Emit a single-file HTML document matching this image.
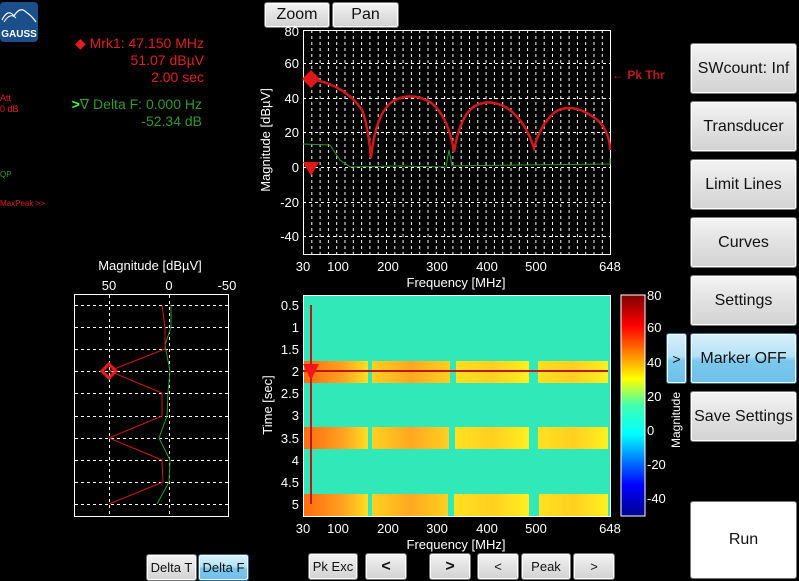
<!DOCTYPE html>
<html><head><meta charset="utf-8"><style>
body{margin:0;width:799px;height:581px;background:#000;overflow:hidden;position:relative;font-family:"Liberation Sans",sans-serif}
.a{position:absolute}
.btn{position:absolute;box-sizing:border-box;border:1px solid #777;border-radius:3px;background:linear-gradient(#f4f4f4,#e2e2e2 50%,#d2d2d2);color:#111;text-align:center;font-size:16px;display:flex;align-items:center;justify-content:center;box-shadow:inset 0 0 0 1px #fff}
.blue{background:linear-gradient(#d8f0fb,#b6e2f6 45%,#7cc8ec 55%,#6fc0ea);border-color:#2a6d92}
.sm{font-size:13px}
svg text{font-family:"Liberation Sans",sans-serif}
</style></head><body>
<div class="a" style="left:0;top:2px;width:38px;height:40px;background:#1b4f8c;border-radius:4px"></div>
<svg class="a" style="left:0;top:2px" width="38" height="40"><path d="M2 18 Q8 6 14 14 Q20 4 26 10 Q32 14 36 20" stroke="#fff" fill="none" stroke-width="1.2"/><path d="M4 20 Q10 10 16 16" stroke="#fff" fill="none" stroke-width="1"/><text x="19" y="35" fill="#fff" font-size="10" font-weight="bold" text-anchor="middle">GAUSS</text></svg>
<div class="a" style="left:30px;top:35px;color:#e02020;font-size:14px;line-height:17px;text-align:right;width:174px;white-space:nowrap">◆ Mrk1: 47.150 MHz<br>51.07 dBµV<br>2.00 sec</div>
<div class="a" style="left:0;top:93px;color:#e02020;font-size:9px;line-height:11px">Att<br>0 dB</div>
<div class="a" style="left:30px;top:96px;color:#2f9a2f;font-size:14px;line-height:17px;text-align:right;width:172px;white-space:nowrap"><b style="color:#4f4">&gt;</b>∇ Delta F: 0.000 Hz<br>-52.34 dB</div>
<div class="a" style="left:0;top:170px;color:#2f9a2f;font-size:8px">QP</div>
<div class="a" style="left:0;top:199px;color:#e02020;font-size:8px">MaxPeak &gt;&gt;</div>

<div class="btn" style="left:264px;top:2px;width:66px;height:26px">Zoom</div>
<div class="btn" style="left:332px;top:2px;width:67px;height:26px">Pan</div>

<svg class="a" style="left:0;top:0" width="690" height="581">
<defs><pattern id="vg" x="303" y="0" width="8.3" height="6" patternUnits="userSpaceOnUse"><rect x="0" y="0" width="1" height="3" fill="#fff"/></pattern>
<linearGradient id="cb" x1="0" y1="1" x2="0" y2="0"><stop offset="0" stop-color="#00008f"/><stop offset=".14" stop-color="#0000ff"/><stop offset=".37" stop-color="#00ffff"/><stop offset=".5" stop-color="#40ffb0"/><stop offset=".62" stop-color="#ffff00"/><stop offset=".86" stop-color="#ff0000"/><stop offset="1" stop-color="#800000"/></linearGradient>
<linearGradient id="b1" x1="0" x2="1"><stop offset="0" stop-color="#ff6a10"/><stop offset=".6" stop-color="#ffa020"/><stop offset="1" stop-color="#ffe020"/></linearGradient>
<linearGradient id="b2" x1="0" x2="1"><stop offset="0" stop-color="#ffd020"/><stop offset=".5" stop-color="#ffa820"/><stop offset="1" stop-color="#ffd020"/></linearGradient>
<linearGradient id="b3" x1="0" x2="1"><stop offset="0" stop-color="#ffe020"/><stop offset=".5" stop-color="#ffd020"/><stop offset="1" stop-color="#fff020"/></linearGradient>
</defs>
<!-- top plot -->
<rect x="303" y="30" width="307" height="224" fill="url(#vg)"/>
<g stroke="#fff" stroke-dasharray="3 3"><line x1="303" y1="63.5" x2="610" y2="63.5"/><line x1="303" y1="98.5" x2="610" y2="98.5"/><line x1="303" y1="132.5" x2="610" y2="132.5"/><line x1="303" y1="167.5" x2="610" y2="167.5"/><line x1="303" y1="202.5" x2="610" y2="202.5"/><line x1="303" y1="236.5" x2="610" y2="236.5"/></g>
<rect x="303.5" y="30.5" width="307" height="224" fill="none" stroke="#fff"/>
<path d="M303 144 L330 145 L340 160 L350 167 L400 166 L446 167 L449 150 L452 166 L520 165 L610 164 L610 158" stroke="#2a9a2a" fill="none"/>
<path d="M311 79 Q345 85 362 110 Q368 125 371 158 Q376 110 395 100 Q412 92 430 102 Q448 115 454 152 Q460 115 475 106 Q490 98 507 108 Q525 120 534 148 Q540 125 555 112 Q568 104 585 112 Q600 120 604 128 Q610 138 610 150" stroke="#d01818" fill="none" stroke-width="2.5"/>
<path d="M311 70 L320 79 L311 88 L302 79Z" fill="#e01818"/>
<path d="M303 162 L319 162 L311 176Z" fill="#e01818"/>
<text x="612" y="79" fill="#c01818" font-size="12" font-weight="bold">← Pk Thr</text>
<g fill="#fff" font-size="13" text-anchor="end"><text x="299" y="36">80</text><text x="299" y="68">60</text><text x="299" y="103">40</text><text x="299" y="137">20</text><text x="299" y="172">0</text><text x="299" y="207">-20</text><text x="299" y="241">-40</text></g>
<g fill="#fff" font-size="13" text-anchor="middle"><text x="303" y="271">30</text><text x="338" y="271">100</text><text x="388" y="271">200</text><text x="437" y="271">300</text><text x="487" y="271">400</text><text x="536" y="271">500</text><text x="610" y="271">648</text><text x="456" y="287">Frequency [MHz]</text></g>
<text transform="translate(270,140) rotate(-90)" fill="#fff" font-size="13" text-anchor="middle">Magnitude [dBµV]</text>
<!-- spectrogram -->
<rect x="303" y="295" width="307" height="221" fill="#30e8b8"/>
<g><rect x="303" y="361" width="65" height="22" fill="url(#b1)"/><rect x="372" y="361" width="78" height="22" fill="url(#b2)"/><rect x="456" y="361" width="73" height="22" fill="url(#b3)"/><rect x="538" y="361" width="70" height="22" fill="url(#b3)"/>
<rect x="303" y="427" width="65" height="22" fill="url(#b1)"/><rect x="372" y="427" width="77" height="22" fill="url(#b2)"/><rect x="455" y="427" width="74" height="22" fill="url(#b3)"/><rect x="538" y="427" width="70" height="22" fill="url(#b3)"/>
<rect x="303" y="494" width="65" height="22" fill="url(#b1)"/><rect x="372" y="494" width="76" height="22" fill="url(#b2)"/><rect x="454" y="494" width="75" height="22" fill="url(#b3)"/><rect x="539" y="494" width="69" height="22" fill="url(#b3)"/></g>
<rect x="303.5" y="295.5" width="307" height="221" fill="none" stroke="#fff"/>
<line x1="311" y1="305" x2="311" y2="504" stroke="#c01818" stroke-width="2"/>
<line x1="303" y1="371" x2="608" y2="371" stroke="#c01818" stroke-width="2"/>
<path d="M303 364 L319 364 L311 380Z" fill="#f01818"/><circle cx="311" cy="369" r="5" fill="#f01818"/>
<g fill="#fff" font-size="13" text-anchor="end"><text x="299" y="310">0.5</text><text x="299" y="332">1</text><text x="299" y="354">1.5</text><text x="299" y="376">2</text><text x="299" y="398">2.5</text><text x="299" y="420">3</text><text x="299" y="443">3.5</text><text x="299" y="465">4</text><text x="299" y="487">4.5</text><text x="299" y="509">5</text></g>
<g fill="#fff" font-size="13" text-anchor="middle"><text x="303" y="533">30</text><text x="338" y="533">100</text><text x="388" y="533">200</text><text x="437" y="533">300</text><text x="487" y="533">400</text><text x="536" y="533">500</text><text x="610" y="533">648</text><text x="456" y="549">Frequency [MHz]</text></g>
<text transform="translate(272,405) rotate(-90)" fill="#fff" font-size="13" text-anchor="middle">Time [sec]</text>
<rect x="621" y="295" width="24" height="221" fill="url(#cb)" stroke="#fff"/>
<g fill="#fff" font-size="13"><text x="647" y="300">80</text><text x="647" y="332">60</text><text x="647" y="367">40</text><text x="647" y="401">20</text><text x="647" y="435">0</text><text x="647" y="469">-20</text><text x="647" y="503">-40</text></g>
<text transform="translate(680,420) rotate(-90)" fill="#fff" font-size="12" text-anchor="middle">Magnitude</text>
<!-- left plot -->
<rect x="74.5" y="294.5" width="154" height="222" fill="none" stroke="#fff"/>
<g stroke="#fff" stroke-dasharray="3 3"><line x1="75" y1="305.5" x2="228" y2="305.5"/><line x1="75" y1="327.5" x2="228" y2="327.5"/><line x1="75" y1="349.5" x2="228" y2="349.5"/><line x1="75" y1="371.5" x2="228" y2="371.5"/><line x1="75" y1="393.5" x2="228" y2="393.5"/><line x1="75" y1="416.5" x2="228" y2="416.5"/><line x1="75" y1="438.5" x2="228" y2="438.5"/><line x1="75" y1="460.5" x2="228" y2="460.5"/><line x1="75" y1="482.5" x2="228" y2="482.5"/><line x1="75" y1="504.5" x2="228" y2="504.5"/>
<line x1="109.5" y1="295" x2="109.5" y2="516"/><line x1="169.5" y1="295" x2="169.5" y2="516"/></g>
<path d="M171 305 L171 327 L165 345 L170 371 L168 393 L167 416 L159 438 L170 460 L169 482 L157 504" stroke="#2a9a2a" fill="none"/>
<path d="M162 305 L165 327 L165 349 L109 371 L162 393 L162 416 L109 438 L162 460 L163 482 L109 504" stroke="#d01818" fill="none"/>
<path d="M109 364 L116 371 L109 378 L102 371Z" fill="none" stroke="#f01818" stroke-width="3"/>
<g fill="#fff" font-size="13" text-anchor="middle"><text x="150" y="270">Magnitude [dBµV]</text><text x="109" y="290">50</text><text x="169" y="290">0</text><text x="227" y="290">-50</text></g>
</svg>

<div class="btn" style="left:690px;top:43px;width:107px;height:51px">SWcount: Inf</div>
<div class="btn" style="left:690px;top:101px;width:107px;height:51px">Transducer</div>
<div class="btn" style="left:690px;top:159px;width:107px;height:51px">Limit Lines</div>
<div class="btn" style="left:690px;top:217px;width:107px;height:51px">Curves</div>
<div class="btn" style="left:690px;top:275px;width:107px;height:51px">Settings</div>
<div class="btn blue" style="left:690px;top:333px;width:107px;height:51px">Marker OFF</div>
<div class="btn blue" style="left:666px;top:333px;width:21px;height:51px;font-size:14px">&gt;</div>
<div class="btn" style="left:690px;top:391px;width:107px;height:51px">Save Settings</div>
<div class="btn" style="left:690px;top:501px;width:107px;height:78px;background:#fff">Run</div>

<div class="btn sm" style="left:146px;top:554px;width:51px;height:27px">Delta T</div>
<div class="btn sm blue" style="left:198px;top:554px;width:51px;height:27px">Delta F</div>
<div class="btn sm" style="left:308px;top:553px;width:50px;height:27px">Pk Exc</div>
<div class="btn" style="left:365px;top:553px;width:42px;height:27px;font-weight:bold">&lt;</div>
<div class="btn" style="left:429px;top:553px;width:42px;height:27px;font-weight:bold">&gt;</div>
<div class="btn sm" style="left:477px;top:553px;width:42px;height:27px">&lt;</div>
<div class="btn sm" style="left:521px;top:553px;width:50px;height:27px">Peak</div>
<div class="btn sm" style="left:573px;top:553px;width:42px;height:27px">&gt;</div>
</body></html>
